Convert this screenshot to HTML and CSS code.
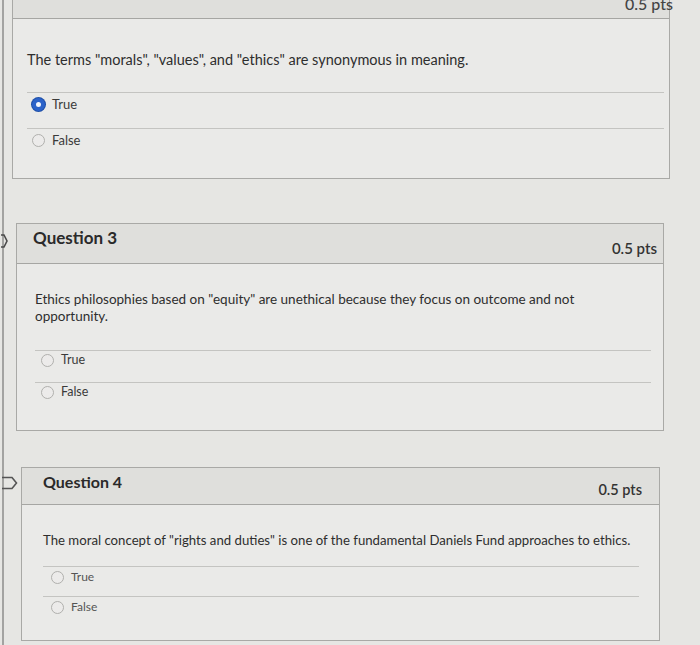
FILE: index.html
```html
<!DOCTYPE html>
<html>
<head>
<meta charset="utf-8">
<link rel="stylesheet" href="styles.css">
</head>
<body>
<div class="page">
  <section class="card card-1">
    <header class="card-head card-head-1">
      <span class="pts pts-1">0.5 pts</span>
    </header>
    <div class="card-body body-1">
      <p class="question q-1">The terms "morals", "values", and "ethics" are synonymous in meaning.</p>
      <ul class="answers">
        <li class="answer row-1"><span class="radio checked"></span><span>True</span></li>
        <li class="answer row-1"><span class="radio"></span><span>False</span></li>
      </ul>
    </div>
  </section>

  <section class="card card-2">
    <svg class="flag flag-2" width="8" height="14" viewBox="0 0 8 14"><path d="M0 1 L3 1 L6 7 L3 13 L0 13" fill="none" stroke="#4a4a4a" stroke-width="1.6"/></svg>
    <header class="card-head card-head-2">
      <h2 class="title">Question 3</h2>
      <span class="pts pts-2">0.5 pts</span>
    </header>
    <div class="card-body body-2">
      <p class="question q-2">Ethics philosophies based on "equity" are unethical because they focus on outcome and not opportunity.</p>
      <ul class="answers">
        <li class="answer row-2"><span class="radio"></span><span>True</span></li>
        <li class="answer row-2"><span class="radio"></span><span>False</span></li>
      </ul>
    </div>
  </section>

  <section class="card card-3">
    <svg class="flag flag-3" width="16" height="14" viewBox="0 0 16 14"><path d="M0 1.5 L10 1.5 L14.5 7 L10 12.5 L0 12.5" fill="none" stroke="#555" stroke-width="1.6"/></svg>
    <header class="card-head card-head-3">
      <h2 class="title title-3">Question 4</h2>
      <span class="pts pts-3">0.5 pts</span>
    </header>
    <div class="card-body body-3">
      <p class="question q-3">The moral concept of "rights and duties" is one of the fundamental Daniels Fund approaches to ethics.</p>
      <ul class="answers">
        <li class="answer row-3"><span class="radio"></span><span>True</span></li>
        <li class="answer row-3"><span class="radio"></span><span>False</span></li>
      </ul>
    </div>
  </section>
</div>
</body>
</html>
```

FILE: styles.css
```css
* { box-sizing: border-box; }
html, body {
  margin: 0;
  padding: 0;
  height: 100%;
  overflow: hidden;
}
body {
  background: #e6e6e3;
  font-family: Lato, "Open Sans", sans-serif;
  color: #2f2f2f;
}
.page {
  display: flex;
  flex-direction: column;
  border-left: 2px solid #a3a3a1;
  margin-left: 2px;
  min-height: 100%;
}
.card {
  position: relative;
  border: 1px solid #a9a9a6;
  background: #eaeae8;
}
.card-1 {
  margin: -24px 30px 0 8px;
}
.card-2 {
  margin: 44px 36px 0 12px;
}
.card-3 {
  margin: 36px 40px 0 17px;
}
.card-head {
  display: flex;
  justify-content: space-between;
  align-items: center;
  background: #dfdfdc;
  border-bottom: 1px solid #a6a6a3;
}
.card-head-1 {
  height: 42px;
  align-items: flex-end;
  padding: 0 0 5px 0;
  justify-content: flex-end;
}
.card-head-2 {
  height: 40px;
  padding: 0 6px 0 16px;
}
.card-head-3 {
  height: 37px;
  padding: 0 17px 0 21px;
}
.title {
  margin: 0;
  font-size: 17px;
  font-weight: 700;
  color: #2a2a2a;
  position: relative;
  top: -6px;
}
.title-3 {
  font-size: 16px;
  top: -5px;
}
.pts {
  font-size: 15px;
  font-weight: 600;
  color: #333;
}
.pts-1 {
  margin-right: -4px;
  font-size: 16px;
  font-weight: 500;
  color: #444;
}
.pts-2 { position: relative; top: 4px; }
.pts-3 { position: relative; top: 3px; font-size: 14.5px; }
.card-body {
  padding: 0 8px 0 14px;
}
.body-1 { padding-top: 31px; padding-bottom: 14px; padding-right: 5px; }
.body-2 { padding-top: 27px; padding-bottom: 16px; padding-left: 18px; padding-right: 12px; }
.body-3 { padding-top: 26px; padding-bottom: 14px; padding-left: 21px; padding-right: 20px; }
.question {
  margin: 0;
  font-size: 14.5px;
  line-height: 20px;
  color: #2e2e2e;
}
.q-2 {
  font-size: 13.5px;
  line-height: 17px;
  max-width: 556px;
}
.q-3 {
  font-size: 13.2px;
  line-height: 18px;
}
.answers {
  list-style: none;
  margin: 0;
  padding: 0;
}
.body-1 .answers { margin-top: 22px; }
.body-2 .answers { margin-top: 25px; }
.body-3 .answers { margin-top: 17px; }
.answer {
  display: flex;
  align-items: flex-start;
  gap: 7px;
  border-top: 1px solid #c4c4c1;
  font-size: 13px;
  line-height: 16px;
  color: #3a3a3a;
}
.row-1 { height: 36px; padding: 3px 0 0 5px; }
.row-2 { height: 32px; padding: 1px 0 0 6px; font-size: 12.5px; }
.row-3 { height: 30px; padding: 2px 0 0 8px; font-size: 12px; color: #555; }
.radio {
  width: 13px;
  height: 13px;
  border-radius: 50%;
  border: 1px solid #b0b0ad;
  background: #ecebea;
  flex: none;
  margin-top: 2px;
}
.radio.checked {
  border: 4px solid #2c63c9;
  background: #f4f6fb;
  box-shadow: 0 0 0 1px #1e4fa8;
}
.flag {
  position: absolute;
}
.flag-2 { left: -16px; top: 10px; }
.flag-3 { left: -20px; top: 8px; }
```
